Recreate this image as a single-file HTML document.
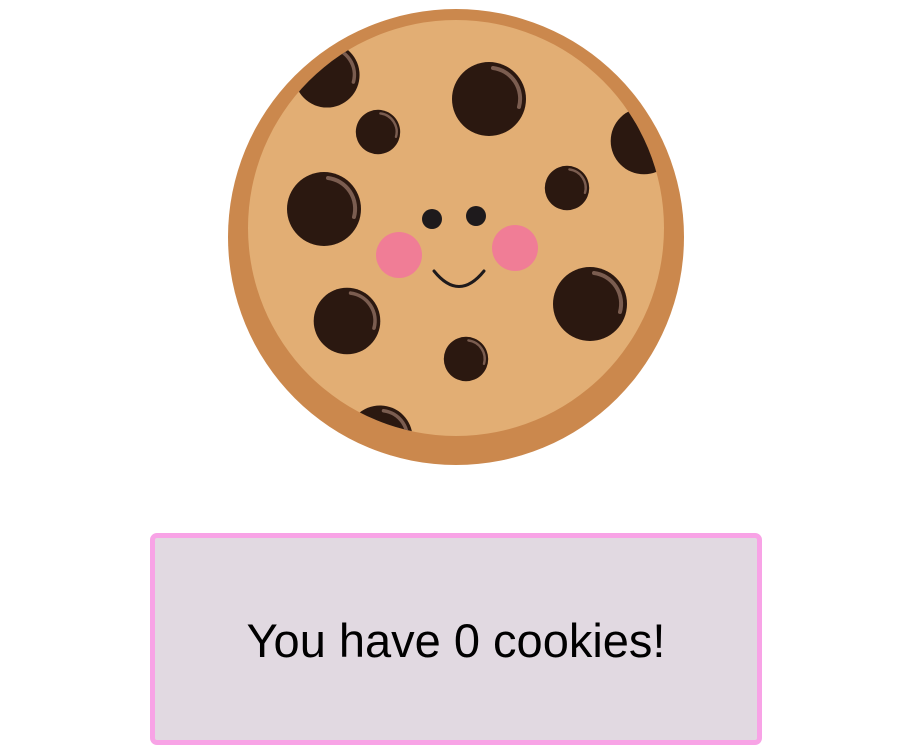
<!DOCTYPE html>
<html><head><meta charset="utf-8"><style>
html,body{margin:0;padding:0;background:#fff;width:904px;height:754px;overflow:hidden;}
svg{position:absolute;left:0;top:0;}
.box{position:absolute;left:150px;top:533px;width:602px;height:202px;border:5px solid #f8a3e6;border-radius:7px;background:#e1d9e1;display:flex;align-items:center;justify-content:center;}
.box span{font-family:"Liberation Sans",sans-serif;font-size:47px;color:#000;display:inline-block;margin-top:2px;white-space:nowrap;}
</style></head><body>
<svg width="904" height="480" viewBox="0 0 904 480">
<defs>
<clipPath id="c"><circle cx="456" cy="228" r="208"/></clipPath>
<g id="chip">
<circle r="37" fill="#2b1810"/>
<path d="M4 -31 A31 31 0 0 1 30 8" fill="none" stroke="#7b5d50" stroke-width="4" stroke-linecap="round"/>
</g>
</defs>
<circle cx="456" cy="237" r="228" fill="#cb884d"/>
<circle cx="456" cy="228" r="208" fill="#e2ae74"/>
<g clip-path="url(#c)">
<use href="#chip" transform="translate(327,75) scale(0.88)"/>
<use href="#chip" transform="translate(489,99)"/>
<use href="#chip" transform="translate(378,132) scale(0.6)"/>
<use href="#chip" transform="translate(644,141) scale(0.9)"/>
<use href="#chip" transform="translate(567,188) scale(0.6)"/>
<use href="#chip" transform="translate(324,209)"/>
<use href="#chip" transform="translate(590,304)"/>
<use href="#chip" transform="translate(347,321) scale(0.9)"/>
<use href="#chip" transform="translate(466,359) scale(0.6)"/>
<use href="#chip" transform="translate(380,438) scale(0.88)"/>
</g>
<circle cx="432" cy="219" r="10" fill="#1e1a1c"/>
<circle cx="476" cy="216" r="10" fill="#1e1a1c"/>
<circle cx="399" cy="255" r="23" fill="#f07d96"/>
<circle cx="515" cy="248" r="23" fill="#f07d96"/>
<path d="M434 271 Q459 302 484 271" fill="none" stroke="#1e1a1c" stroke-width="3" stroke-linecap="round"/>
</svg>
<div class="box"><span>You have 0 cookies!</span></div>
</body></html>
